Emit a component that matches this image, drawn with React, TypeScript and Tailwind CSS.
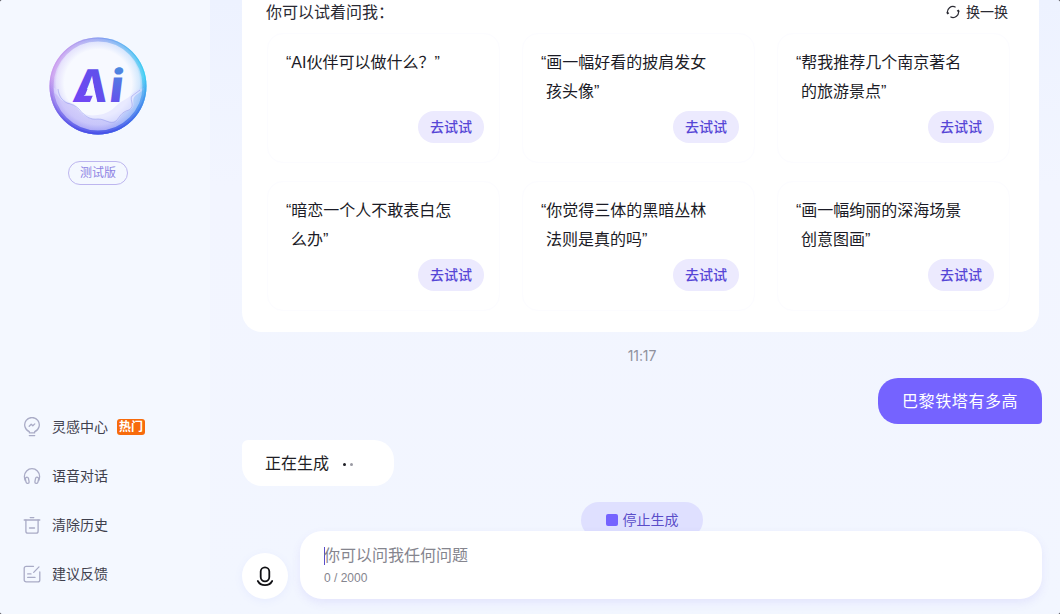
import type { ReactNode } from 'react';

type Prompt = { lines: string[] };

const prompts: Prompt[] = [
  { lines: ['AI伙伴可以做什么？'] },
  { lines: ['画一幅好看的披肩发女', '孩头像'] },
  { lines: ['帮我推荐几个南京著名', '的旅游景点'] },
  { lines: ['暗恋一个人不敢表白怎', '么办'] },
  { lines: ['你觉得三体的黑暗丛林', '法则是真的吗'] },
  { lines: ['画一幅绚丽的深海场景', '创意图画'] },
];

function LineIcon({ children }: { children: ReactNode }) {
  return (
    <svg
      className="w-[18px] h-5 shrink-0 text-[#a9abc6]"
      viewBox="0 0 18 20"
      fill="none"
      stroke="currentColor"
      strokeWidth="1.3"
      strokeLinecap="round"
      strokeLinejoin="round"
      aria-hidden="true"
    >
      {children}
    </svg>
  );
}

const menu = [
  {
    label: '灵感中心',
    hot: true,
    icon: (
      <LineIcon>
        <path d="M6.300 15.800v-1.200A7.300 7.300 0 1 1 11.700 14.600v1.200z" />
        <path d="M6.300 18.600h5.400" />
        <path d="M6.200 9.200l2-1.900 1.600 1.500 2-1.900" />
      </LineIcon>
    ),
  },
  {
    label: '语音对话',
    icon: (
      <LineIcon>
        <path d="M2.300 14.600C1.400 13.200 1.400 11.700 1.400 10.300a7.600 7.600 0 0 1 15.200 0c0 1.400 0 2.900-.9 4.300" />
        <rect x="2.700" y="11.200" width="3.100" height="6.200" rx="1.500" transform="rotate(-12 4.200 14.300)" />
        <rect x="12.200" y="11.200" width="3.100" height="6.200" rx="1.500" transform="rotate(12 13.800 14.300)" />
      </LineIcon>
    ),
  },
  {
    label: '清除历史',
    icon: (
      <LineIcon>
        <path d="M1.200 5h15.600M7.200 2.600h3.600" />
        <path d="M2.900 5v11.200a2 2 0 0 0 2 2h8.200a2 2 0 0 0 2-2V5" />
        <path d="M6.500 13h5" />
      </LineIcon>
    ),
  },
  {
    label: '建议反馈',
    icon: (
      <LineIcon>
        <path d="M10.500 2.300H3.200a2 2 0 0 0-2 2v11.600a2 2 0 0 0 2 2h11.600a2 2 0 0 0 2-2V8" />
        <path d="M16 2.900l-5.300 5.500M4.700 9.900H8M4.700 13.400h7.300" />
      </LineIcon>
    ),
  },
];

function Logo() {
  return (
    <svg className="w-[98px] h-[98px]" viewBox="0 0 98 98" role="img" aria-label="Ai">
      <defs>
        <linearGradient id="letterA" x1="0" y1="1" x2="1" y2="0">
          <stop offset="0" stopColor="#7444f6" />
          <stop offset="1" stopColor="#5856e6" />
        </linearGradient>
        <linearGradient id="letterI" x1="0" y1="1" x2="0" y2="0">
          <stop offset="0.2" stopColor="#6552ec" />
          <stop offset="1" stopColor="#4598dc" />
        </linearGradient>
        <linearGradient id="ring" x1="0.1" y1="0.1" x2="1" y2="0.3">
          <stop offset="0" stopColor="#c99bee" />
          <stop offset="0.45" stopColor="#819df0" />
          <stop offset="1" stopColor="#38cdf3" />
        </linearGradient>
        <linearGradient id="ringBottom" x1="0" y1="0" x2="0" y2="1">
          <stop offset="0.4" stopColor="#5a4be8" stopOpacity="0" />
          <stop offset="1" stopColor="#4340e6" />
        </linearGradient>
        <radialGradient id="glass" cx="0.5" cy="0.47" r="0.52">
          <stop offset="0.68" stopColor="#f7f9ff" />
          <stop offset="0.84" stopColor="#eef0ff" stopOpacity="0.85" />
          <stop offset="1" stopColor="#d9dcff" stopOpacity="0" />
        </radialGradient>
        <linearGradient id="wave" x1="0" y1="0" x2="1" y2="0">
          <stop offset="0" stopColor="#c0b0f6" />
          <stop offset="0.6" stopColor="#b3b2f7" />
          <stop offset="1" stopColor="#7fc0f7" />
        </linearGradient>
        <clipPath id="ball">
          <circle cx="49" cy="49" r="46.500" />
        </clipPath>
      </defs>
      <circle cx="49" cy="49" r="48.500" fill="url(#ring)" />
      <circle cx="49" cy="49" r="48.500" fill="url(#ringBottom)" />
      <circle cx="49" cy="49" r="47.500" fill="url(#glass)" />
      <g clipPath="url(#ball)">
        <path
          d="M4 50c6 3 7 10 13 14 4 2 7 1 11 6 6 9 14 9 21 8 8-1 13-4 18-9 6-6 12-7 16-12 2-3 6-5 12-6v46H4z"
          fill="#dcdcff"
          opacity="0.5"
        />
        <path
          d="M4 56c6 1 6 7 12 9 5 1 9 3 13 7 6 8 12 11 20 10 8 0 12 6 19 2 4-4 5-9 13-11 7-4 0-10 6-15l9-6v47H4z"
          fill="url(#wave)"
          opacity="0.5"
        />
        <path
          d="M9 52c1 8 4 11 9 14 5 1 9 3 12 6 6 8 12 11 19 10 8 0 12 6 18 2 4-4 5-9 13-11 7-4 0-10 3-14l8-6"
          fill="none"
          stroke="#7d84e8"
          strokeWidth="0.7"
          opacity="0.6"
        />
      </g>
      <circle cx="49" cy="49" r="46.500" fill="none" stroke="url(#ring)" strokeWidth="4" opacity="0.55" />
      <circle cx="49" cy="49" r="46.500" fill="none" stroke="url(#ringBottom)" strokeWidth="4" opacity="0.7" />
      <g transform="translate(22.500 65) skewX(-7)" className="font-['Inter'] text-[45px] font-extrabold">
        <text textLength="35" lengthAdjust="spacingAndGlyphs" fill="url(#letterA)">
          A
        </text>
        {/* opens the crossbar into a short foot */}
        <path d="M17.500-24L12.500-6H20L18.200.5H26z" fill="#f7f9ff" />
        <path d="M4-6.200h16.500L18.500 0H4z" fill="#7048f4" />
        <text x="36.500" textLength="14" lengthAdjust="spacingAndGlyphs" fill="url(#letterI)">
          i
        </text>
      </g>
    </svg>
  );
}

function Sidebar() {
  return (
    <aside className="w-[210px] shrink-0 flex flex-col bg-[#f4f8ff]">
      <div className="w-[196px] pt-[37px] flex flex-col items-center">
        <Logo />
        <span className="mt-[26px] h-6 w-[60px] flex items-center justify-center rounded-full border border-[#bdb6ef] text-xs text-[#8e83e3]">
          测试版
        </span>
      </div>
      <nav className="mt-auto mb-4 pl-[23px]">
        {menu.map((item) => (
          <a key={item.label} className="h-[49px] flex items-center text-sm text-[#3f404d]">
            <span className="pt-px">{item.icon}</span>
            <span className="ml-[11px]">{item.label}</span>
            {item.hot && (
              <span className="ml-[9px] w-7 h-4 flex items-center justify-center rounded-[3px] bg-[#f76b0c] text-xs font-bold text-white">
                热门
              </span>
            )}
          </a>
        ))}
      </nav>
    </aside>
  );
}

function PromptCard({ lines }: Prompt) {
  return (
    <div className="h-[130px] pt-[14px] pl-[23px] pr-[15px] pb-[19px] flex flex-col justify-between rounded-2xl border border-[#fcfcff]">
      <p className="text-base leading-[29px] text-[#1b1b26] whitespace-nowrap">
        {lines.map((line, i) => (
          <span key={line} className="block">
            {i === 0 && <span className="-ml-[5px]">“</span>}
            {line}
            {i === lines.length - 1 && '”'}
          </span>
        ))}
      </p>
      <button className="self-end w-[66px] h-8 shrink-0 rounded-full bg-[#eceafe] text-sm font-medium text-[#5646d6]">
        去试试
      </button>
    </div>
  );
}

export default function App() {
  return (
    <div className="h-[614px] w-[1060px] bg-[#55565c]">
      <div className="h-full flex overflow-hidden rounded-[3px] bg-[#f2f5ff] font-['Liberation_Sans','Noto_Sans_CJK_SC',sans-serif]">
        <Sidebar />

        <main className="flex-1 min-w-0 flex flex-col pl-8 pr-[18px] bg-linear-to-b from-[#edf2ff] via-[#f2f5ff] via-30% to-[#f2f6ff]">
          {/* Suggestions */}
          <section className="w-[797px] h-[332px] px-[25px] rounded-b-[20px] bg-white">
            <header className="h-[33px] pb-[9px] flex items-center justify-between text-[#2a2a33]">
              <h2 className="-ml-px mt-[2px] text-base leading-6">你可以试着问我：</h2>
              <button className="mr-[6px] flex items-center gap-[6px] text-sm">
                <svg
                  className="w-[14px] h-[14px]"
                  viewBox="0 0 14 14"
                  fill="none"
                  stroke="currentColor"
                  strokeWidth="1.200"
                  aria-hidden="true"
                >
                  <path d="M1.700 8.600A5.500 5.500 0 0 1 9.600 2.200M4.400 11.800a5.500 5.500 0 0 0 7.900-6.400" />
                  <path d="M.7 7.400l1 1.300 1.200-.9M13.300 6.600l-1-1.300-1.200.9" />
                </svg>
                换一换
              </button>
            </header>
            <div className="grid grid-cols-[repeat(3,233px)] gap-x-[22px] gap-y-[18px]">
              {prompts.map((p) => (
                <PromptCard key={p.lines[0]} lines={p.lines} />
              ))}
            </div>
          </section>

          {/* Conversation */}
          <time className="mt-[14px] h-5 text-center text-sm leading-5 tracking-[-0.1px] font-['Inter'] text-[#8f919c]">
            11:17
          </time>
          <div className="mt-3 self-end h-[46px] w-[164px] pt-px pl-6 flex items-center rounded-[20px] rounded-br-[4px] bg-[#7563ff] text-base tracking-[0.6px] text-white">
            巴黎铁塔有多高
          </div>
          <div className="mt-4 h-[46px] w-[152px] pt-px pl-[23px] flex items-center rounded-[20px] rounded-tl-[6px] bg-white text-base text-[#1f1f26]">
            正在生成
            <span className="ml-[14px] mt-[2px] flex gap-1">
              <i className="size-[3px] rounded-full bg-[#1f1f26]" />
              <i className="size-[3px] rounded-full bg-[#9a9aa3]" />
            </span>
          </div>

          <div className="mt-4 h-[29px] flex justify-center overflow-hidden">
            <button className="w-[122px] h-9 pb-px flex items-center justify-center gap-[5px] rounded-full bg-[#dfe0ff] text-sm text-[#5a4dc9]">
              <span className="size-3 rounded-[2px] bg-[#7563ff]" />
              停止生成
            </button>
          </div>

          {/* Composer */}
          <div className="flex items-end gap-3">
            <button className="size-[46px] flex items-center justify-center rounded-full bg-white shadow-[0_2px_8px_rgba(110,130,255,0.08)]">
              <svg
                className="w-[18px] h-[22px]"
                viewBox="0 0 18 22"
                fill="none"
                stroke="#111115"
                strokeWidth="1.800"
                strokeLinecap="round"
                aria-hidden="true"
              >
                <rect x="4.700" y="2.300" width="8.600" height="14" rx="4.300" />
                <path d="M1.800 16c1.400 2.700 4.200 4.100 7.200 4.100s5.800-1.400 7.200-4.100" />
              </svg>
            </button>
            <div className="flex-1 h-[68px] pl-6 pt-[13px] rounded-[22px] bg-white shadow-[0_4px_10px_rgba(110,90,240,0.1)]">
              <div className="h-6 flex items-center text-base text-[#85858e]">
                <span className="w-px h-[18px] bg-[#5a4dc9] -mr-px" />
                你可以问我任何问题
              </div>
              <div className="mt-[2px] text-xs text-[#85858e]">0 / 2000</div>
            </div>
          </div>
        </main>
      </div>
    </div>
  );
}
